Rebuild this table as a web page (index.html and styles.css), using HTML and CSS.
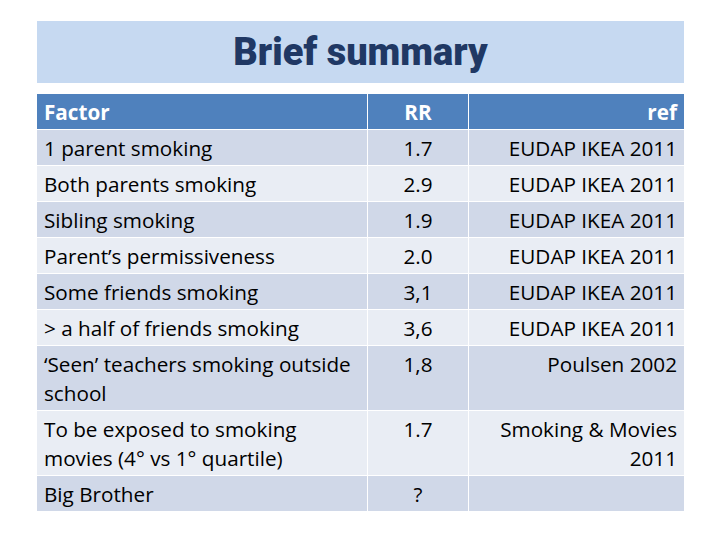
FILE: index.html
```html
<!DOCTYPE html>
<html>
<head>
<meta charset="utf-8">
<link rel="stylesheet" href="styles.css">
</head>
<body>
<div class="slide">
  <div class="title-box"><h1 class="title">Brief summary</h1></div>
  <table class="summary">
    <colgroup>
      <col class="c1"><col class="c2"><col class="c3">
    </colgroup>
    <thead>
      <tr><th class="left">Factor</th><th class="center">RR</th><th class="right">ref</th></tr>
    </thead>
    <tbody>
      <tr class="dark"><td>1 parent smoking</td><td class="center">1.7</td><td class="right">EUDAP IKEA 2011</td></tr>
      <tr class="light"><td>Both parents smoking</td><td class="center">2.9</td><td class="right">EUDAP IKEA 2011</td></tr>
      <tr class="dark"><td>Sibling smoking</td><td class="center">1.9</td><td class="right">EUDAP IKEA 2011</td></tr>
      <tr class="light"><td>Parent’s permissiveness</td><td class="center">2.0</td><td class="right">EUDAP IKEA 2011</td></tr>
      <tr class="dark"><td>Some friends smoking</td><td class="center">3,1</td><td class="right">EUDAP IKEA 2011</td></tr>
      <tr class="light"><td>&gt; a half of friends smoking</td><td class="center">3,6</td><td class="right">EUDAP IKEA 2011</td></tr>
      <tr class="dark"><td>‘Seen’ teachers smoking outside school</td><td class="center">1,8</td><td class="right">Poulsen 2002</td></tr>
      <tr class="light"><td>To be exposed to smoking movies (4° vs 1° quartile)</td><td class="center">1.7</td><td class="right">Smoking &amp; Movies 2011</td></tr>
      <tr class="dark"><td>Big Brother</td><td class="center">?</td><td class="right"></td></tr>
    </tbody>
  </table>
</div>
</body>
</html>
```
FILE: styles.css
```css
html, body {
  margin: 0;
  padding: 0;
  background: #ffffff;
}
.slide {
  width: 720px;
  height: 540px;
  padding: 21px 0 0 37px;
  box-sizing: border-box;
}
.title-box {
  width: 647px;
  height: 62px;
  background: #c6d9f1;
  display: flex;
  align-items: center;
  justify-content: center;
  margin-bottom: 11px;
}
.title {
  margin: 0;
  font-family: Roboto, "Liberation Sans", sans-serif;
  font-weight: 900;
  font-size: 38px;
  letter-spacing: 0;
  color: #203864;
  line-height: 1;
}
.summary {
  width: 648px;
  border-collapse: collapse;
  table-layout: fixed;
  font-family: "Open Sans", "Liberation Sans", sans-serif;
  font-size: 20.7px;
  color: #000000;
  margin-left: -1px;
}
.c1 { width: 331px; }
.c2 { width: 101px; }
.c3 { width: 216px; }
.summary th, .summary td {
  border: 1px solid #ffffff;
  padding: 4px 7px 2px 7px;
  line-height: 29px;
  vertical-align: top;
}
.summary td:first-child, .summary th:first-child {
  padding-right: 3px;
}
.summary th {
  background: #4f81bd;
  color: #ffffff;
  font-weight: bold;
}
.summary tr:first-child th { border-top: none; }
.dark td { background: #d0d8e8; }
.light td { background: #e9edf4; }
.left { text-align: left; }
.center { text-align: center; }
.right { text-align: right; }
```
